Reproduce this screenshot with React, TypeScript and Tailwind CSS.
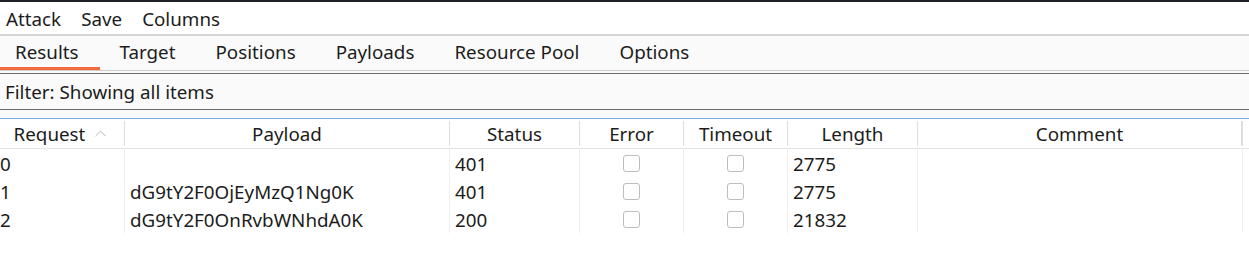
import { ChevronUp } from "lucide-react";

const menus = ["Attack", "Save", "Columns"];
const tabs = ["Results", "Target", "Positions", "Payloads", "Resource Pool", "Options"];
const headers = ["Request", "Payload", "Status", "Error", "Timeout", "Length", "Comment"];

const rows = [
  { req: "0", payload: "", status: "401", length: "2775" },
  { req: "1", payload: "dG9tY2F0OjEyMzQ1Ng0K", status: "401", length: "2775" },
  { req: "2", payload: "dG9tY2F0OnRvbWNhdA0K", status: "200", length: "21832" },
];

const grid = "grid grid-cols-[125px_325px_130px_104px_104px_130px_325px]";

function Checkbox() {
  return <div className="w-[17px] h-[17px] rounded-[3px] border border-[#bdbdbd] bg-white" />;
}

export default function App() {
  return (
    <div
      className="w-[1249px] h-[266px] bg-white text-[#1c1c1c] text-[18.8px] leading-none overflow-hidden"
      style={{ fontFamily: '"Noto Sans", "Open Sans", sans-serif' }}
    >
      {/* window edge */}
      <div className="h-[2px] bg-[#1f2128]" />

      {/* Menu bar */}
      <div className="h-[32px] flex items-center gap-[20px] pl-[6px] pt-[3px] bg-white">
        {menus.map((m) => (
          <span key={m}>{m}</span>
        ))}
      </div>
      <div className="h-[2px] bg-[#d6d6d6]" />

      {/* Tabs */}
      <div className="h-[34px] flex bg-[#fafafa]">
        {tabs.map((t, i) => (
          <div
            key={t}
            className={`flex items-center h-full pt-[2px] ${i === 0 ? "pl-[15px] pr-[21px] border-b-[3px] border-[#f26b3a]" : "px-[20px] border-b-[3px] border-transparent"}`}
          >
            {t}
          </div>
        ))}
      </div>
      <div className="h-[1px] bg-[#cbcbcb]" />
      <div className="h-[2px] bg-[#fafafa]" />
      <div className="h-[1px] bg-[#6b6b6b]" />

      {/* Filter */}
      <div className="h-[35px] flex items-center pl-[5px] pt-[2px] bg-[#fafafa]">Filter: Showing all items</div>
      <div className="h-[1px] bg-[#6b6b6b]" />
      <div className="h-[8px] bg-[#fafafa]" />
      <div className="h-[1px] bg-[#83ade0]" />

      {/* Table header */}
      <div className={`${grid} h-[30px] border-b border-[#e4e4e4]`}>
        {headers.map((h, i) => (
          <div key={h} className="h-full py-[2px] flex">
            <div
              className={`flex-1 flex items-center justify-center gap-[6px] pt-[2px] ${i < headers.length - 1 ? "border-r border-[#dedede]" : "border-r-2 border-[#dedede]"}`}
            >
              <span>{h}</span>
              {i === 0 && (
                <ChevronUp className="w-[19px] h-[19px] text-[#aaaaaa] -mt-[3px]" strokeWidth={1.1} />
              )}
            </div>
          </div>
        ))}
      </div>

      {/* Rows */}
      {rows.map((r) => (
        <div key={r.req} className={`${grid} h-[28px]`}>
          <div className="flex items-center pt-[3px] border-r border-[#efefef]">{r.req}</div>
          <div className="flex items-center pl-[5px] pt-[3px] border-r border-[#efefef]">{r.payload}</div>
          <div className="flex items-center pl-[5px] pt-[3px] border-r border-[#efefef]">{r.status}</div>
          <div className="flex items-center justify-center border-r border-[#efefef]">
            <Checkbox />
          </div>
          <div className="flex items-center justify-center border-r border-[#efefef]">
            <Checkbox />
          </div>
          <div className="flex items-center pl-[5px] pt-[3px] border-r border-[#efefef]">{r.length}</div>
          <div className="border-r border-[#efefef]" />
        </div>
      ))}
    </div>
  );
}
